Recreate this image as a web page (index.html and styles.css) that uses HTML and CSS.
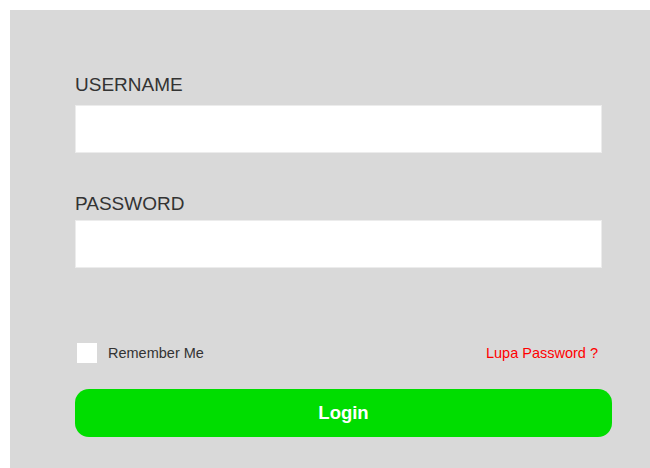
FILE: index.html
```html
<!DOCTYPE html>
<html>
<head>
<meta charset="utf-8">
<link rel="stylesheet" href="styles.css">
</head>
<body>
<form class="login-box">
  <label class="field-label" for="username">USERNAME</label>
  <input class="field-input" id="username" type="text">
  <label class="field-label second" for="password">PASSWORD</label>
  <input class="field-input" id="password" type="password">
  <div class="options-row">
    <label class="remember">
      <span class="check"></span>
      <span>Remember Me</span>
    </label>
    <a class="forgot" href="#">Lupa Password ?</a>
  </div>
  <button class="login-btn" type="button">Login</button>
</form>
</body>
</html>
```

FILE: styles.css
```css
html, body {
  margin: 0;
  padding: 0;
  background: #ffffff;
  font-family: "Liberation Sans", Arial, sans-serif;
  overflow: hidden;
}

body {
  padding: 10px 0 0 10px;
}

.login-box {
  background: #d9d9d9;
  width: 640px;
  height: 470px;
  box-sizing: border-box;
  padding: 64px 0 0 65px;
  display: flex;
  flex-direction: column;
  align-items: flex-start;
}

.field-label {
  font-size: 19px;
  line-height: 22px;
  color: #333333;
  margin-bottom: 9px;
}

.field-label.second {
  margin-top: 40px;
  margin-bottom: 5px;
}

.field-input {
  width: 527px;
  height: 48px;
  box-sizing: border-box;
  border: 1px solid #ececec;
  background: #ffffff;
  margin: 0;
  padding: 0 10px;
  outline: none;
}

.options-row {
  width: 527px;
  display: flex;
  align-items: center;
  justify-content: space-between;
  margin-top: 75px;
  height: 20px;
}

.remember {
  display: flex;
  align-items: center;
  font-size: 14.5px;
  color: #333333;
}

.check {
  width: 20px;
  height: 20px;
  background: #ffffff;
  margin: 0 11px 0 2px;
}

.forgot {
  font-size: 14.5px;
  color: #ff0000;
  text-decoration: none;
  margin-right: 4px;
}

.login-btn {
  margin-top: 26px;
  width: 537px;
  height: 48px;
  border: none;
  border-radius: 14px;
  background: #00dd00;
  color: #ffffff;
  font-family: "Liberation Sans", Arial, sans-serif;
  font-weight: bold;
  font-size: 18.5px;
  padding: 0;
}
```
